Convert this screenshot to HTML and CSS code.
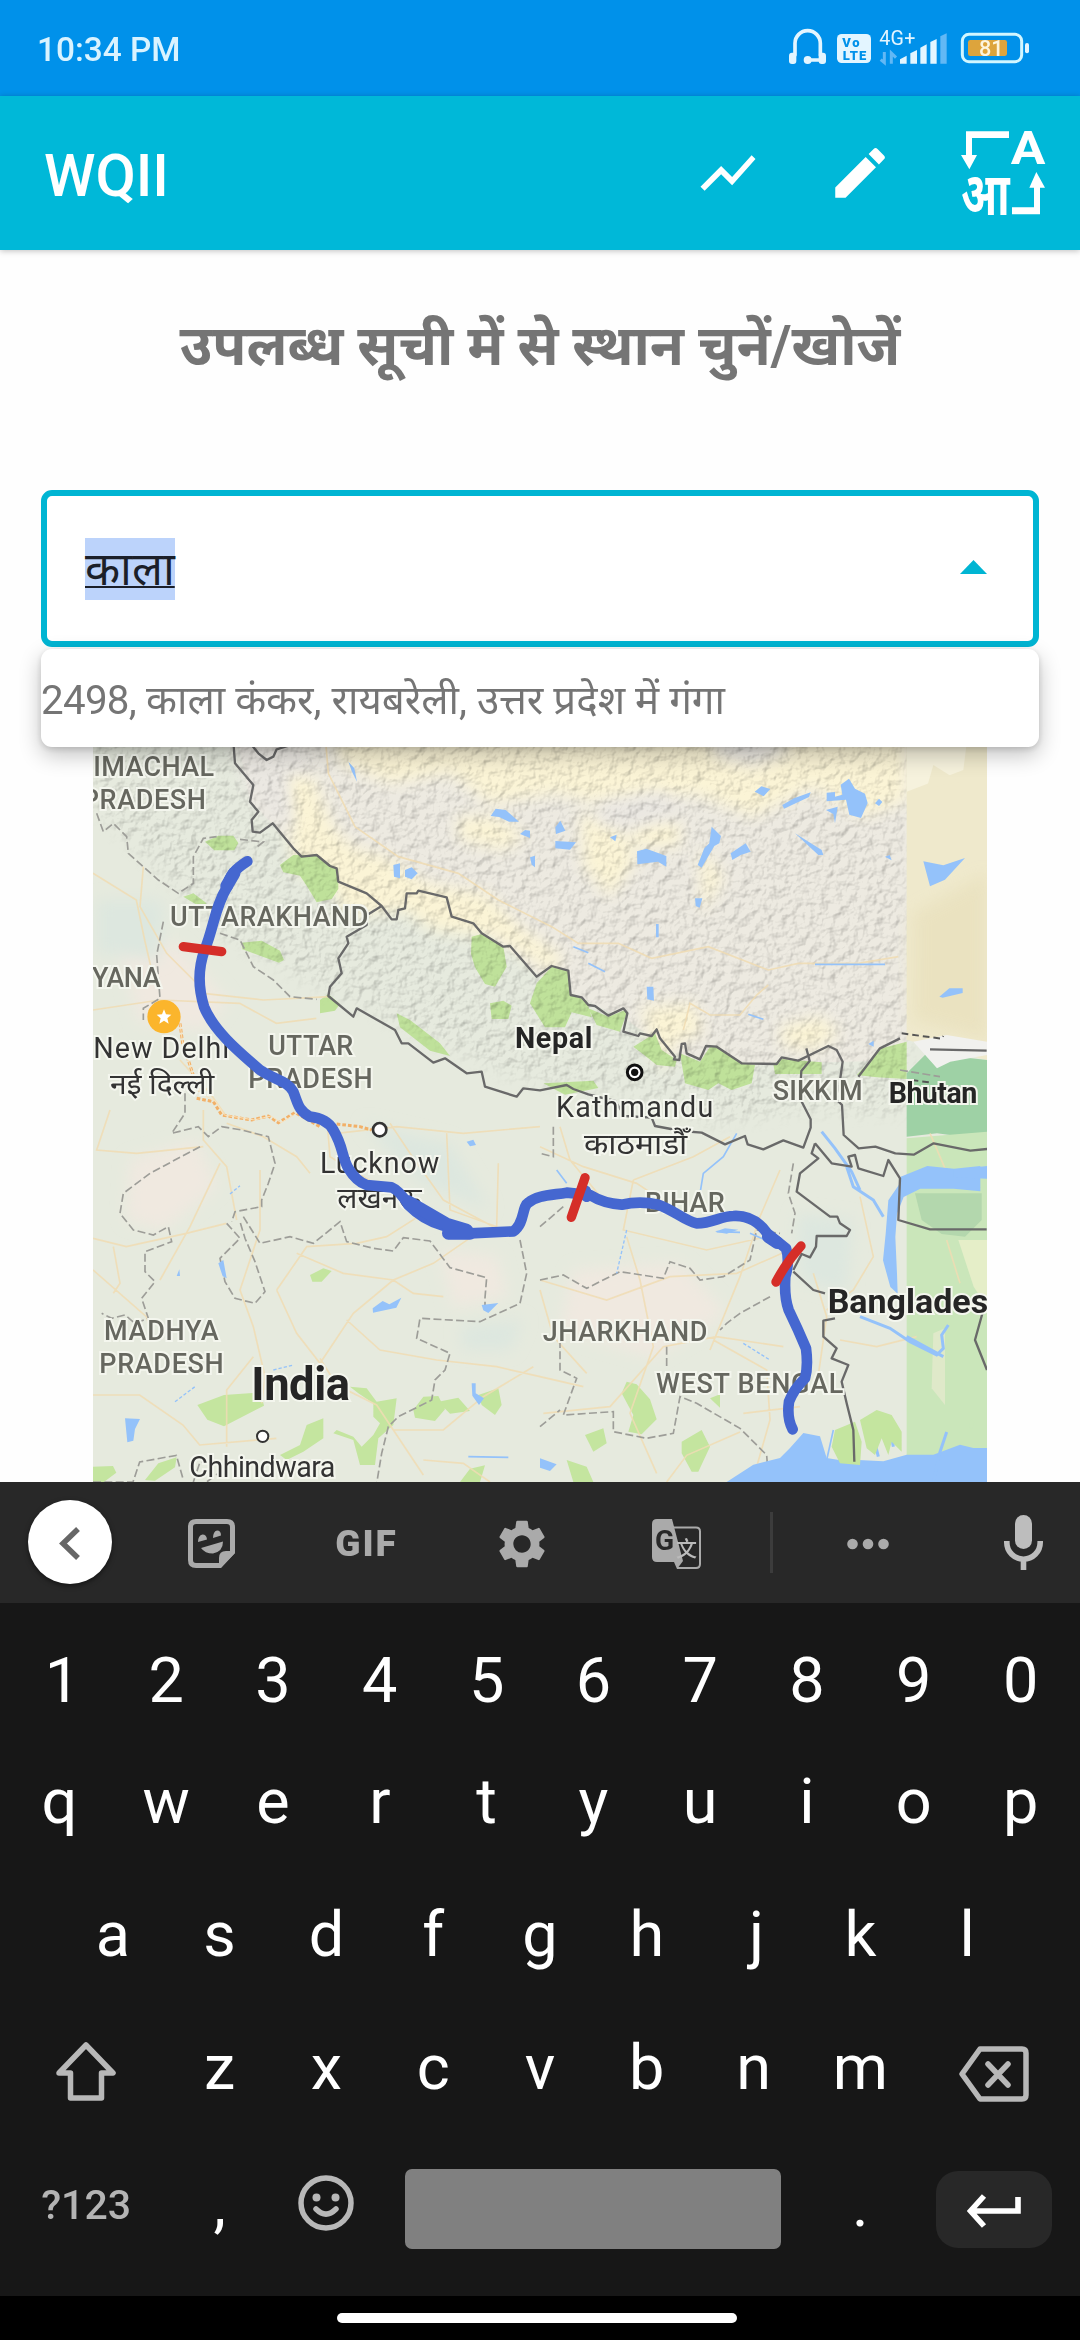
FILE: index.html
```html
<!DOCTYPE html>
<html lang="hi">
<head>
<meta charset="utf-8">
<title>WQII</title>
<link rel="stylesheet" href="styles.css">
</head>
<body>
<div class="screen">
  <header class="status">
    <span class="clock">10:34 PM</span>
    <svg class="status-icons" viewBox="441 81 738 126">
      <g fill="none" stroke="#e3f5ff" stroke-width="11">
        <path d="M465 165V130a38 38 0 0 1 76 0v35M500 180h42" stroke-linecap="round"/>
      </g>
      <g fill="#e3f5ff">
        <rect x="447" y="158" width="22" height="34" rx="9"/><rect x="536" y="158" width="22" height="34" rx="9"/>
        <circle cx="503" cy="180" r="12"/>
        <rect x="591" y="102" width="102" height="87" rx="14"/>
        <path d="M780 178l20-11v24h-20zM811 160l20-10v41h-20zM841 143l19-10v58h-19zM871 126l19-9v74h-19z"/>
        <rect x="1155" y="129" width="12" height="31" rx="6"/>
      </g>
      <path d="M901 109l19-9v91h-19z" fill="#62b8f5"/>
      <path d="M733 156v32l-11-9M754 191v-32l14 14" fill="none" stroke="#62b8f5" stroke-width="9"/>
      <text x="607" y="141" class="volte" textLength="52">Vo</text>
      <text x="608" y="179" class="volte" textLength="71">LTE</text>
      <text x="718" y="136" class="net" textLength="108">4G+</text>
      <rect x="967" y="103" width="178" height="82" rx="20" fill="none" stroke="#d2f6ff" stroke-width="9"/>
      <rect x="984" y="120" width="117" height="48" rx="7" fill="#dda43c"/>
      <text x="1017" y="169" class="charge" textLength="74">81</text>
    </svg>
  </header>

  <div class="appbar">
    <h1 class="app-title">WQII</h1>
    <div class="actions">
      <svg class="action" viewBox="0 0 24 24" fill="#fff"><path d="M3.5 18.49l6-6.01 4 4L22 6.92l-1.41-1.41-7.09 7.97-4-4L2 16.99z"/></svg>
      <svg class="action" viewBox="0 0 24 24" fill="#fff"><path d="M3 17.25V21h3.75L17.81 9.94l-3.75-3.75L3 17.25zM20.71 7.04a1 1 0 0 0 0-1.41l-2.34-2.34a1 1 0 0 0-1.41 0l-1.83 1.83 3.75 3.75 1.83-1.83z"/></svg>
      <svg class="language" viewBox="963 393 252 252" fill="#fff">
        <path d="M1107 394H978v71h-15l25 43 23-43h-15v-51h111zM1116 643h84v-80h15l-26-47-21 47h14v59h-66z"/>
        <text x="1112" y="492" class="lang-a" textLength="104" lengthAdjust="spacingAndGlyphs">A</text>
        <text x="963" y="646" class="lang-hi" textLength="146" lengthAdjust="spacingAndGlyphs">आ</text>
      </svg>
    </div>
  </div>

  <main class="content">
    <h2 class="prompt">उपलब्ध सूची में से स्थान चुनें/खोजें</h2>
    <div class="combo">
      <div class="field">
        <span class="typed">काला</span>
        <svg class="caret" viewBox="0 0 27 14"><path d="M0 14L13.500 0 27 14z" fill="#00b5d3"/></svg>
      </div>
      <div class="options"><div class="option"><span class="code">2498,</span> काला कंकर, रायबरेली, उत्तर प्रदेश में गंगा</div></div>
    </div>

    <svg class="map" viewBox="39 -120 2682 2346">
      <defs>
        <filter id="soft" x="-20%" y="-20%" width="140%" height="140%"><feGaussianBlur stdDeviation="22"/></filter>
        <filter id="relief" x="0" y="0" width="100%" height="100%" color-interpolation-filters="sRGB">
          <feTurbulence type="fractalNoise" baseFrequency="0.035" numOctaves="3" seed="8" result="n"/>
          <feDiffuseLighting in="n" surfaceScale="6" diffuseConstant="1.18" lighting-color="#ffffff" result="l"><feDistantLight azimuth="225" elevation="55"/></feDiffuseLighting>
          <feComposite in="l" in2="SourceGraphic" operator="in"/>
        </filter>
        <mask id="hills">
          <rect x="39" y="-120" width="2682" height="2346" fill="#000"/>
          <path d="M39-120H2480V1120L2150 1110 1900 1150 1650 1060 1300 1010 950 850 700 730 420 580 250 400 39 200z" fill="#fff" filter="url(#soft)"/>
        </mask>
      </defs>

      <rect x="39" y="-120" width="2682" height="2346" fill="#e6eade"/>
      <path d="M450-120H2480V960L2150 970 1960 970 1800 950 1640 840 1470 760 1370 700 1110 480 900 500 640 320 510 180z" fill="#edeae1"/>

      <g fill="#fbf4d6" filter="url(#soft)">
        <path d="M720-120H2480V180l-130 50-150-90-180 90-180-70-230 40-180-40-200 30-120-90-180 30-150-60z"/>
        <path d="M610 90l90 20 60 150 60 60 100 30 120 80 180 30 100 100 130 90-30 50-180-110-180-20-90-60-170 20-60-110-100-30z"/>
        <path d="M1130 230l120 0 90 60-70 40-130-30zM1500 220l110 30 60 110-80 110-80-90zM1650 230l150 20 0 70-150 0zM1860 320l70 90-60 110zM2100 860l120-30 60 50-80 50-90-10z"/>
        <path d="M1680 800l160-10 30 90-90 30-30 90z"/>
      </g>
      <g fill="#ebe8e2" filter="url(#soft)">
        <path d="M450-20l200 20 60 90-90 10 20 170-80-40-60-80zM1880-20l160-10 100 60-120 50-110-30zM1560 180l180-30 80 60-150 60-120-20z"/>
      </g>
      <g fill="#f0e9e0" filter="url(#soft)">
        <path d="M100 560l200 60 140 160-60 90-200-20zM150 1260l200-60 60 140-160 130-110-30zM1480 1590l320-20 140 150-220 130-280-80zM1080 1530l170 20 30 120-160 30z"/>
      </g>
      <g fill="#dde7df" filter="url(#soft)">
        <path d="M50 480l200 0-10 180-190-20zM850 1150l260 60 120 200-220-90zM2150 1420l170 20-20 220-140-40zM1140 1760l190-20-40 90-140 0z"/>
      </g>

      <!-- forests and parks -->
      <g fill="#bfe19a">
        <path d="M375 305l40-18 45 0 15 22-12 22-60 0zM600 375l40-30 70 0 45 32 20 10v60l-20 30-45 10-30-50-20-30-50-10zM485 608l60-6 55 30 12 28-15 8-110-40zM1175 590l30-8 65 38 10 60-35 60-30-8-30-50-12-40zM1230 790l40-8 25 15-10 40-50 0zM950 820l40 20 90 70 30 38-60-16-90-70z"/>
        <path d="M1350 790l20-60 45-50 50 12 5 70 50 20 15 50-60-15-20 45-60 0zM1525 805l60 25 50-20 5 10-20 55-70-20zM1660 920l65-40 20 50 45 30-5 20-55-5-25-20zM1800 940l60 25 30-45 25 0 60 45 50 10-10 55-60 20-40-20-30 20-70-20zM2080 972l25-15 120 10v35l-140 0zM2330 1005l75-80 75-20v112l-90-5zM1390 1030l150-8 15 22-100 20z"/>
        <path d="M310 470l30-10 40 30-20 10zM720 780l25-18 35 30-15 20-45 8z"/>
      </g>
      <rect x="39" y="-120" width="2682" height="2346" fill="#fff" filter="url(#relief)" mask="url(#hills)" class="relief"/>
      <g fill="#c4e59f">
        <path d="M690 1605l40-20 25 8-30 32-28 0zM352 1995l80-30 110-8 10 40-120 62-50-20zM600 2145l60-30 20-60 50-20v60l-60 40-50 25zM760 2080l10-10 50 20 25 30 35-35 20-35-20-20 0-40-45-30-25-20 50 5 30 40 60-10-10 80-45 40-10 80-45 0-20-75zM1000 2010l30-40 45-2 20 40-30 35-60 -10zM1075 1985l60-12 35 40-60 8zM1195 1965l60-20 10 50-20 30-40-30zM39 2180l60-2 10 20-40 30-30 5zM195 2220l40-50 55-18-5 30-60 40zM1140 2226l30-40 45-10-15 50z"/>
        <path d="M1625 1960l15-35 30 8 40 45 20 60-45 45-40-8 15-50zM1515 2085l55-20 10 45-40 25zM1805 2105l60-35 25 50-35 75-20 0-30-55zM1460 2160l60 20 20 46h-60zM1890 1975l30-12 0 40z"/>
      </g>

      <!-- darker eastern tile -->
      <path d="M2480-120h241V960l-241-60z" fill="#efe9cc"/>
      <path d="M2480-20h60l120 30-10 80-170 65z" fill="#f6f2dd"/>
      <path d="M2560 75l80 50-100 20z" fill="#efe9cc"/>
      <path d="M2500 520l110-60 111-60v500l-220-60z" fill="#e9e1be" filter="url(#soft)" opacity=".8"/>
      <path d="M2480 1000l60-60 181 20v240l-150-20-91 10z" fill="#9ed1a5"/>
      <path d="M2500 905l100-20 121 20v40l-110 20-40 20z" fill="#f1f1ee"/>
      <path d="M2480 1195l241-20v1051h-241z" fill="#cae6ba"/>
      <path d="M2505 1360h200v80l-50 50-70-8-60-42z" fill="#b3d7ad"/>
      <path d="M2635 1500h86v200l-40-60z" fill="#e5eec8"/>
      <path d="M2560 1780l35-15 0 230-40-50z" fill="#dfe9c9"/>

      <!-- roads -->
      <g fill="none" stroke="#f0dcb3" stroke-width="5" opacity=".85">
        <path d="M735-20l10 120 80 160 130 90 180 50 120 80 160 80 80 50 120 0 100 45 170-35 180 70 90-20 180 0 120-20M1810 870l20-80 60 35 90 0 50-60 35-30"/>
        <path d="M39 400l130 80 25 120 30 130M190 380l-10 120 80 140 110 110M39 810l200-30 240 10 110 60 120-15M370 760l180 20 200-10M300 960l90 100 50 70M370 1110l0 90 70 80 30 160M90 1110l-40 120 120 10 200-20M440 1150l110 40 100 60 40 50M420 1270l-90 190-90 160M39 1495l100 25 180-40 120-30M100 1520l20 110-20 30M39 1590l160 140 20 60M540 1290l0 180-60 180 40 110 35 150-10 80M590 1650l90-130 150-10 90-20 110-70M650 1540l140 60 150 20 60 40 90 10M590 1650l60 130 70 90 100-150 120-100 120-50 130-90M800 1740l100 90 170 30 180 20 130 30 130 30M520 1850l-80 100 0 170M39 1965l140 0 130 90 50 60 230-20M720 1855l50 80 120 60 60 90 80 120M940 2070l150 0 120-100 150-90M1030 2160l120 10 80 56M770 1180l180-20 200 20 230-20M900 1340l-150-90-10-120M930 1150l60 90 100 140 150 80M1100 1180l10 230 140 50 5-190M1380 1220l130 60 160 50 120 80M1660 1320l-30 150 250 60 180-40M1660 1320l180-70 110-60M1440 1160l30 100 100 120M1380 1620l200 60 190-70 200-10 180-80M1640 1490l40 130 40 200-70 200 80 180M1390 2020l200-20 160-180 160-30 200 30M1520 1900l-100-110-40-140M1900 1800l160 90 10 150-40 140M2100 1290l-60 140-60 180-90 220M2340 1370l40 180-60 100-80 60M2200 1600l40 130-30 210M2280 1800l110 20 120-30M1990 2020l170-20M1760 2226l60-80 160-70M2550 1180l60 140M2600 1500l40 130"/>
      </g>
      <g fill="none" stroke="#f2b068" stroke-width="9" stroke-dasharray="11 6">
        <path d="M300 850l8 60 30 90 25 60M350 1075l50 10 25 40 90 15 50-12 30 20 50-30M650 1120l70 40M770 1152l70 8 35 10"/>
      </g>
      <path d="M300 850l8 60 30 90 25 60 45 25 25 40 90 15 50-12 30 20 50-30" fill="none" stroke="#fae3bd" stroke-width="3"/>

      <!-- state borders -->
      <g fill="none" stroke="#9d9d98" stroke-width="5" stroke-dasharray="24 10">
        <path d="M50 220l20 55 30-25 40 40 5 50 90 80 60 40 45-30 0-80 30-55 40-5M480 298l70 8-20 15M250 545l-20 100 10 130-50 30 0 35M420 580l60 20 40 80 60 40 50 50 80 8M315 1060l0 60-40 60 80-20 30 30 40-30 60 10 80 20 20 80-20 60-20 50 0 20-80 15-10 30M360 1220l-150 80-80 60-10 60 40 50 60 15 45-25 10 45-80 30 0 60 30 30-40 50 20 60-40 15-30-25-40 10-30-15M440 1450l40 45-60 60 15 70 30 50 60 15 30-35-30-90-30-70-15-50M490 1430l50 80 90-20 70 20 80-65 20 60 80 20 60 8 30-40 80 10 60 80 110 30-5 60 0 30M1320 1500l20 100-20 90-120 55-180-10-10 60 100 45-15 50-30 30-10 60-100 50-30 30-20 80-20 120M340 2226l20-60 100 0-80 60M39 2226l120 0 20-60 110-20 20 70"/>
        <path d="M1380 1460l70-60M1380 1620l70-15 70 40 100-50 130 20 20-50 60 20 30 35 70-10 80-50 20-90 70 10M1420 1160v90l-40-10M2140 1270l-15 90 20 60-10 60M2070 1670l-90 50-40 30-20 20M1440 1800l0 90 50 25-40 110 150-10 0 60 100 20 80-15 20-110 50 20 130 75 80 80 5 70M1380 2060l60-50M1760 1820l0 60M2460 990l120 20M2460 1345l120-15 120 15"/>
      </g>
      <path d="M2465 880l120 16 5-8M2495 1020l60 8" fill="none" stroke="#555" stroke-width="6" stroke-dasharray="20 12"/>

      <!-- water -->
      <g fill="#94c2fa">
        <path d="M1232 228l15-22 30 4 40 35-30 0-30-14zM1320 282l15-12 15 2 0 22zM940 375l20-5 0 45-18-5zM975 390l20-8 18 18-18 18-20-8zM1350 352l15-5 0 35-10-8zM805 65l18 20 8 40-15-30z"/>
        <path d="M1426 262l15-20 15 30-28 10zM1426 303l62 4-18 22-44-4zM1671 334l28-8 60 22 0 32-25-15-62 8zM1895 260l28 28-5 22-15 8-38 65-12-8 20-50 15-15zM1952 340l45-30 15 25-30 10-25 15zM2024 155l20-16 27 8-20 22zM2107 195l35-20 50-18-5 14-75 35zM2145 280l80 50 5 15-15 0zM2240 158l25-2 0 14 22-6-5-30 25-18 18 30 30 15 8 28-20 45-35-10-10-45-58 5zM2238 210l35-10-8 50-5-28zM1590 292l20-8-4 20zM1845 475l22 0-8 28-12-5zM1888 405l22 14zM1728 552l8 0 0 40-8 0zM1700 740l20 0 2 42-20-4zM2530 364l60 12 65-22-60 65-45 20zM2578 770l30-25 40 0 0 14-60 14zM2385 190l12-14 10 10-10 12zM2415 350l14-5 6 16zM2365 912l16-10 0 18z"/>
        <path d="M990 1120l70 55M135 2035l45 2-15 30-5 35-18 5zM415 1570l15-10 10 55-12-6zM290 1608l8-20 2 20zM878 1705l30-22 20 10 36-20-15 30-70 15zM1205 1695l50-6-30 30-15-8zM1175 1930l12 0 0 30 25 15-15 20-20-28zM1160 1205l20-6 8 16-18 4zM1380 2155l50 18-20 20-30-10zM1905 1475l30-10 40 4-35 12z"/>
        <path d="M2480 1290l2-20 80-32 80 8 79-8v76l-80-8-100 0-50 25-20 50-5 70 5 110 2 60-22-20-22-80 8-80 8-100z" transform="translate(-20 40)"/>
        <path d="M2620 1290l101-12v38l-101-4z"/>
        <path d="M1940 2226l80-52 80-20 30-30 40-45 50 10 20 65 60 10 15-85 10 0-5 80 90 5 70-20 80 0 80-30 40 10 50 0 50-30 50-80 5-40-20-50-10-80 10-10 30 70 40 40 30 20 10-50 21-25v451z"/>
      </g>
      <g fill="none" stroke="#94c2fa" stroke-width="9">
        <path d="M2300 1280l20 60 60 40 30 50M2225 1175l40 50 50 70 25 55M2340 1730l90 35 60 40 80 40 20-20-5-40 20-30M2560 2226l20-90 20-60M2380 2090l15 60M2430 2060l10 60M2480 1790l110 60" />
        <path d="M1970 1180l-40 70-60 50-10 60M1430 1290l30 40M1910 1475l70 2M2010 1480l70 30M2205 673h210M1525 670l50 25M1480 620l45 18M2005 823l45 15M1165 2150l120 2M2260 2070l-20 90" stroke-width="5"/>
        <path d="M285 1985l60-45M450 1362l30-25M1640 1470l-30 130M580 1890l60-15M1990 1810l80 50" stroke-width="4" stroke-dasharray="10 6"/>
      </g>
      <path d="M2255 2120l10-50 60-25 20 60-5 70-60-5zM2340 2040l50-30 45 15 30 50 0 60-30-30-10 40-20-50-20 50-25-20z" fill="#c4e59f"/>
      <path d="M2672 2035l12 12-10 22-6-10z" fill="#cae6ba"/>

      <!-- country borders -->
      <g fill="none" stroke="#696969" stroke-width="7" stroke-linejoin="round">
        <path d="M458-20l7 90 55 65-10 50 25 30-20 25 3 35 22 3 38-28 62 75 25 25 45-5 40 33 20 7 5 40 85 35 45 38 30 40 15 0 5-28 20-5 5-45 30 0 5-8 85 20 15 58 65 20 25 30 65 40 20-2 80 92 45-32 50 14 7 73 33 7 20 23 20 3 40 29 45-22 12 15-12 55 45 13 5-8 35 8 15-20 10 27 45 55-3 8 16 2 7-48 10-2 5 30 40 18 18-40 32 2 75 50 105 2 15-20 50 10 90-44 25 12 18 35-10 70-12 40 20 20 5 90 45 40 50-5 60 20 55 4 60-34 110 22 71-7M515 15l20 25 25 20 20-10 10-22 45-14"/>
        <path d="M905 498l-45 28 0 29-60 35 5 20-30 45 10 45-35 40-5 28 75 62 10-25 115 65 20 40 20 0 75 58 35-13 65 45 45-5 10 45 95 30 20-25 50 6 80-16 20 12 45 16 80 20 30 45 80 5 10 25 80 15 60 5 70 35 60-25 8 25 47 15 60-27 60 22 22-60 0-25-33-65 5-80 25-30-10-38"/>
        <path d="M2335 1010l65-85 60-30M2550 928l170 4M2205 1210l-10 30 20 15-55 45-10 55 100 75 22 0 8 20 30 20-10 18-90 0-2 32-18 32-25-10-25 48M2205 1210l50 60 60 10-10-30 20-5 10 40 75 23 15-48 35 55-5 125 95 28h170M2140 1595l60 55 35 10M2265 1735l-35 7 0 48 40 35-15 30 50 20-20 50 15 65 20 80 3 95M2710 1710l-25 90 36 90"/>
      </g>

      <!-- places -->
      <circle cx="252" cy="830" r="50" fill="#fbb52c"/>
      <path d="M252 808l6 15 16 1-12 11 4 16-14-9-14 9 4-16-12-11 16-1z" fill="#fff"/>
      <g fill="#fff" stroke="#333" stroke-width="8"><circle cx="899" cy="1169" r="20"/><circle cx="548" cy="2089" r="17" stroke-width="6"/></g>
      <circle cx="1664" cy="997" r="22" fill="#fff" stroke="#111" stroke-width="9"/><circle cx="1664" cy="997" r="11" fill="#111"/>

      <g class="state">
        <text x="40" y="108" textLength="362">IMACHAL</text><text x="5" y="208" textLength="373">PRADESH</text>
        <text x="270" y="558" textLength="595">UTTARAKHAND</text><text x="36" y="741" textLength="206">YANA</text>
        <text x="565" y="945" textLength="255">UTTAR</text><text x="505" y="1045" textLength="373">PRADESH</text>
        <text x="2078" y="1080" textLength="270">SIKKIM</text><text x="1695" y="1417" textLength="239">BIHAR</text>
        <text x="1388" y="1802" textLength="494">JHARKHAND</text><text x="1728" y="1960" textLength="562">WEST BENGAL</text>
        <text x="72" y="1800" textLength="344">MADHYA</text><text x="58" y="1898" textLength="373">PRADESH</text>
      </g>
      <g class="city">
        <text x="40" y="955" textLength="408">New Delhi</text><text x="90" y="1063" textLength="313" lengthAdjust="spacingAndGlyphs">नई दिल्ली</text>
        <text x="1428" y="1132" textLength="472">Kathmandu</text><text x="1512" y="1242" textLength="310" lengthAdjust="spacingAndGlyphs">काठमाडौँ</text>
        <text x="720" y="1300" textLength="358">Lucknow</text><text x="772" y="1405" textLength="253" lengthAdjust="spacingAndGlyphs">लखनऊ</text>
        <text x="328" y="2210" textLength="438">Chhindwara</text>
      </g>
      <g class="country">
        <text x="1305" y="925" textLength="232">Nepal</text><text x="2426" y="1090" textLength="266">Bhutan</text>
        <text x="2243" y="1718" class="bd">Bangladesh</text><text x="514" y="1980" class="india" textLength="296">India</text>
      </g>

      <!-- Ganga stretches -->
      <g fill="none" stroke-linecap="round" stroke-linejoin="round">
        <path d="M502 364C465 388 448 405 442 440 405 500 402 560 374 630 352 690 355 745 372 800 400 870 470 930 540 990 590 1022 625 1025 640 1055 654 1090 655 1112 690 1130Q740 1135 760 1170C790 1220 785 1250 805 1285Q830 1325 860 1335L935 1342Q960 1352 985 1395 1030 1440 1085 1455L1170 1480 1300 1474C1335 1450 1325 1400 1345 1388 1370 1366 1410 1366 1460 1358L1530 1365Q1570 1390 1625 1394 1680 1382 1735 1394C1790 1415 1810 1440 1850 1450 1900 1450 1920 1428 1960 1428 2010 1425 2040 1450 2062 1480L2118 1525Q2130 1560 2116 1610 2112 1670 2126 1710 2155 1770 2178 1825 2185 1880 2175 1915 2140 1950 2127 1985 2120 2035 2138 2068" stroke="#4567d0" stroke-width="32"/>
        <path d="M462 400L440 438M985 1385L1100 1452 1160 1470M1105 1480h65M1515 1355l5 12M2065 1490l27 18" stroke="#4567d0" stroke-width="38"/>
        <path d="M310 620l115 15M1515 1313l-41 119M2163 1518q-45 50-75 108" stroke="#d52e28" stroke-width="28"/>
      </g>
    </svg>
  </main>

  <section class="keyboard">
    <div class="toolbar">
      <span class="back"><svg viewBox="0 0 84 84"><path d="M50 29L35 43.500 50 58" fill="none" stroke="#666" stroke-width="5.500"/></svg></span>
      <span class="tool"><svg class="sticker" viewBox="0 0 47 49">
        <path d="M8 2.500H39Q44.500 2.500 44.500 8V33L32 46.500H8Q2.500 46.500 2.500 41V8Q2.500 2.500 8 2.500z" fill="none" stroke="#aaa" stroke-width="5"/>
        <path d="M31 48V39Q31 32 38 32h9v2L33 48zM10 23q0-6.500 4.500-7.500 4 0 4.500 5zM25 19q0-6.500 4-7.500 4 0 4 5zM13 29l22-6.500q0 10-10 12-8 0-12-5.500z" fill="#aaa"/></svg></span>
      <span class="tool gif">GIF</span>
      <span class="tool"><svg class="gear" viewBox="0 0 24 24" fill="#aaa"><path d="M19.140 12.940c.04-.3.06-.61.06-.94 0-.32-.02-.64-.07-.94l2.030-1.580a.49.49 0 0 0 .12-.61l-1.920-3.320a.488.488 0 0 0-.59-.22l-2.390.96c-.5-.38-1.030-.7-1.620-.94l-.36-2.540a.484.484 0 0 0-.48-.41h-3.840c-.24 0-.43.17-.47.41l-.36 2.540c-.59.24-1.130.57-1.620.94l-2.390-.96c-.22-.08-.47 0-.59.22L2.740 8.870c-.12.21-.08.47.12.61l2.030 1.580c-.05.3-.09.63-.09.94s.02.64.07.94l-2.030 1.580a.49.49 0 0 0-.12.61l1.920 3.320c.12.22.37.29.59.22l2.390-.96c.5.38 1.030.7 1.620.94l.36 2.540c.05.24.24.41.48.41h3.840c.24 0 .44-.17.47-.41l.36-2.540c.59-.24 1.130-.56 1.620-.94l2.390.96c.22.08.47 0 .59-.22l1.920-3.320c.12-.22.07-.47-.12-.61l-2.010-1.580zM12 15.600A3.610 3.610 0 0 1 8.400 12c0-1.980 1.620-3.600 3.600-3.600s3.600 1.620 3.600 3.600-1.620 3.600-3.600 3.600z"/></svg></span>
      <span class="tool"><svg class="translate" viewBox="0 0 49 50">
        <path d="M20 8.500H44q4 0 4 4V45q0 4-4 4H25" fill="none" stroke="#aaa" stroke-width="2"/>
        <path d="M5 0H20L31 42l-6 8-3-7H5Q0 43 0 38V5Q0 0 5 0z" fill="#aaa"/>
        <text x="3" y="31" class="tr-g">G</text><text x="24" y="37" class="tr-zh">文</text></svg></span>
      <span class="divider"></span>
      <span class="tool dots"><svg viewBox="0 0 42 12" fill="#aaa"><circle cx="5.500" cy="6" r="5.300"/><circle cx="21" cy="6" r="5.300"/><circle cx="36.500" cy="6" r="5.300"/></svg></span>
      <svg class="mic" viewBox="0 0 39 55"><rect x="11" y="0" width="17" height="34" rx="8.500" fill="#bdbdbd"/><path d="M2.800 26v1.500a16.700 16.700 0 0 0 33.400 0V26M19.500 44v11" fill="none" stroke="#bdbdbd" stroke-width="5.600"/></svg>
    </div>
    <div class="keys">
      <div class="row digits"><span class="one">1</span><span>2</span><span>3</span><span>4</span><span>5</span><span>6</span><span>7</span><span>8</span><span>9</span><span>0</span></div>
      <div class="row"><span>q</span><span>w</span><span>e</span><span>r</span><span>t</span><span>y</span><span>u</span><span>i</span><span>o</span><span>p</span></div>
      <div class="row middle"><span>a</span><span>s</span><span>d</span><span>f</span><span>g</span><span>h</span><span class="jay">j</span><span>k</span><span>l</span></div>
      <div class="row">
        <span class="wide"><svg class="shift" viewBox="0 0 62 60"><path d="M31 4L58 32H46.500V57H15.500V32H4z" fill="none" stroke="#b8b8b8" stroke-width="5.500" stroke-linejoin="round"/></svg></span>
        <span>z</span><span>x</span><span>c</span><span>v</span><span>b</span><span>n</span><span>m</span>
        <span class="wide"><svg class="erase" viewBox="0 0 70 56"><path d="M21 3H63q4 0 4 4V49q0 4-4 4H21L3 28z" fill="none" stroke="#b8b8b8" stroke-width="5.500" stroke-linejoin="round"/><path d="M29 18l20 21M49 18L29 39" stroke="#b8b8b8" stroke-width="5.500" stroke-linecap="round"/></svg></span>
      </div>
      <div class="row bottom">
        <span class="wide symbols">?123</span><span class="punct">,</span>
        <span><svg class="smile" viewBox="0 0 56 56"><circle cx="28" cy="28" r="25" fill="none" stroke="#b8b8b8" stroke-width="5.500"/><circle cx="18.500" cy="22.500" r="4" fill="#b8b8b8"/><circle cx="37.500" cy="22.500" r="4" fill="#b8b8b8"/><path d="M18 34q10 10 20 0" fill="none" stroke="#b8b8b8" stroke-width="5.500" stroke-linecap="round"/></svg></span>
        <span class="space"></span><span class="punct">.</span>
        <span class="wide"><span class="enter"><svg viewBox="0 0 54 34"><path d="M51 3V17H5M17 2L3.500 17 17 32" fill="none" stroke="#fff" stroke-width="5.600"/></svg></span></span>
      </div>
    </div>
  </section>
  <footer class="nav"><span class="handle"></span></footer>
</div>
</body>
</html>
```
FILE: styles.css
```css
* { box-sizing: border-box; }
body { margin: 0; font-family: Roboto, "Noto Sans", "Noto Sans Devanagari", sans-serif; }
.screen { width: 1080px; height: 2340px; display: flex; flex-direction: column; overflow: hidden; background: #fefefe; }
svg { display: block; flex: none; }

.status { height: 96px; flex: none; background: #0091ea; display: flex; align-items: center; justify-content: space-between; padding: 0 47px 0 37px; }
.clock { font-size: 33.400px; font-weight: 500; color: #d9f3ff; padding-top: 2px; }
.status-icons { width: 246px; height: 42px; }
.volte { font: 900 39px Roboto, sans-serif; fill: #0091ea; }
.net { font: 400 59px Roboto, sans-serif; fill: #e3f5ff; }
.charge { font: 500 65px Roboto, sans-serif; fill: #fdf5de; }

.appbar { height: 154px; flex: none; background: #00b8d8; display: flex; align-items: center; justify-content: space-between; padding: 0 35px 0 44px; box-shadow: 0 1px 6px rgba(0,0,0,.25); position: relative; }
.app-title { margin: 0; font-size: 58.500px; font-weight: 500; color: #fff; padding-top: 5px; }
.actions { display: flex; align-items: center; gap: 66px; }
.action { width: 66px; height: 66px; }
.language { width: 84px; height: 84px; margin-left: 2px; overflow: visible; }
.lang-a { font: 700 139px Roboto, sans-serif; }
.lang-hi { font: 700 176px "Noto Sans", "Noto Sans Devanagari", sans-serif; }

.content { height: 1232px; flex: none; padding-top: 51px; overflow: hidden; display: flex; flex-direction: column; align-items: center; }
.prompt { margin: 0; height: 90px; line-height: 90px; font-size: 55.700px; font-weight: 700; color: #757575; white-space: nowrap; }
.combo { width: 998px; height: 157px; margin-top: 99px; position: relative; flex: none; }
.field { height: 157px; border: 6px solid #00b5d3; border-radius: 11px; background: #fff; display: flex; align-items: center; justify-content: space-between; padding: 0 46px 0 38px; }
.typed { height: 62px; line-height: 64px; background: #bcd3fb; color: #1b1f29; font-size: 45.700px; text-decoration: underline; text-decoration-thickness: 2px; }
.caret { width: 27px; height: 14px; margin-bottom: 3px; }
.options { position: absolute; top: 159px; left: 0; width: 998px; height: 98px; border-radius: 11px; background: #fff; box-shadow: 0 8px 22px rgba(0,0,0,.24), 0 2px 6px rgba(0,0,0,.14); display: flex; align-items: center; z-index: 2; }
.option { font-size: 40.300px; color: #757575; white-space: nowrap; }
.code { letter-spacing: -.700px; }
.map { width: 894px; height: 782px; margin-top: 53px; }
.relief { opacity: .42; mix-blend-mode: multiply; }
.state { font: 500 81px Roboto, sans-serif; fill: #66675f; stroke: #f4f6ee; stroke-width: 12px; paint-order: stroke; }
.city { font: 400 86px Roboto, "Noto Sans", "Noto Sans Devanagari", sans-serif; fill: #333; stroke: #f4f6ee; stroke-width: 12px; paint-order: stroke; }
.country { font: 700 86px Roboto, sans-serif; fill: #252525; stroke: #f4f6ee; stroke-width: 12px; paint-order: stroke; }
.bd { font-size: 102px; }
.india { font-size: 136px; }

.keyboard { flex: none; height: 814px; background: #171717; }
.toolbar { height: 121px; background: #282828; display: flex; align-items: center; }
.back { width: 84px; height: 84px; margin: 0 22px 2px 28px; border-radius: 50%; background: #fff; box-shadow: 0 2px 5px rgba(0,0,0,.5); flex: none; }
.tool { width: 155px; flex: none; display: flex; justify-content: center; align-items: center; }
.sticker { width: 47px; height: 49px; margin-top: 2px; }
.gif { color: #aaa; font-size: 37px; font-weight: 900; letter-spacing: 2px; padding-top: 2px; }
.gear { width: 58px; height: 58px; margin-top: 2px; }
.translate { width: 49px; height: 50px; margin-top: 2px; }
.tr-g { font: 700 28px Roboto, sans-serif; fill: #282828; }
.tr-zh { font: 500 21px "Noto Sans CJK SC", sans-serif; fill: #bbb; }
.divider { width: 3px; height: 61px; margin: 0 17px 0 16px; background: #3c3c3c; flex: none; }
.dots svg { width: 42px; height: 12px; margin-top: 2px; }
.mic { width: 39px; height: 55px; margin-left: 59px; margin-top: 0; }

.keys { padding: 23px 6px 0; color: #fff; font-size: 63px; }
.row { height: 133px; display: flex; justify-content: center; }
.row > span { width: 106.800px; flex: none; display: flex; align-items: center; justify-content: center; }
.digits { height: 109px; }
.row > .one, .row > .jay { padding-left: 6px; }
.row > .wide { width: 160.200px; }
.shift { width: 62px; height: 60px; margin-top: 6px; }
.erase { width: 70px; height: 56px; margin-top: 12px; }
.bottom { height: 150px; }
.bottom > .symbols { color: #b4b4b4; font-size: 41px; font-weight: 500; padding-bottom: 9px; }
.bottom > .punct { padding-bottom: 9px; }
.smile { width: 56px; height: 56px; margin-bottom: 12px; }
.bottom > .space { width: 376px; height: 80px; margin: 35px 25.600px 0; border-radius: 7px; background: #808080; }
.enter { width: 116px; height: 77px; border-radius: 22px; background: #282828; display: flex; align-items: center; justify-content: center; }
.enter svg { width: 54px; height: 34px; margin-top: 4px; }
.nav { height: 44px; flex: none; background: #000; display: flex; align-items: center; justify-content: center; padding: 0 6px 8px 0; }
.handle { width: 400px; height: 10px; border-radius: 5px; background: #fff; margin-top: 8px; }
```
